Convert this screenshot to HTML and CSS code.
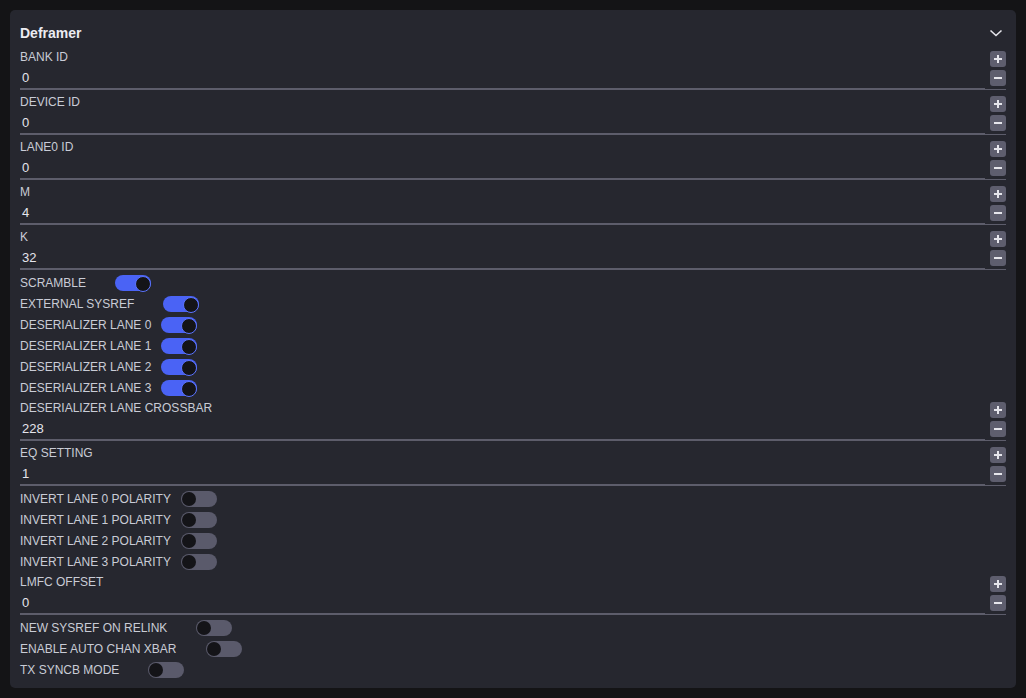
FILE: index.html
```html
<!DOCTYPE html>
<html lang="en">
<head>
  <meta charset="UTF-8" />
  <meta name="viewport" content="width=device-width, initial-scale=1.0" />
  <title>Deframer</title>
  <link rel="stylesheet" href="styles.css">
</head>
<body>
  <div class="panel">
    <div class="panel-header">
      <span class="panel-title">Deframer</span>
      <svg class="chevron" width="14" height="14" viewBox="0 0 14 14">
        <polyline points="1.5,4.5 7,9.5 12.5,4.5" fill="none" stroke="#e4e4ea" stroke-width="1.6" />
      </svg>
    </div>

    <div class="field">
      <div class="field-main">
        <div class="field-label">BANK ID</div>
        <div class="field-input">0</div>
      </div>
      <div class="spin">
        <button class="spin-btn plus"></button>
        <button class="spin-btn minus"></button>
      </div>
    </div>

    <div class="field">
      <div class="field-main">
        <div class="field-label">DEVICE ID</div>
        <div class="field-input">0</div>
      </div>
      <div class="spin">
        <button class="spin-btn plus"></button>
        <button class="spin-btn minus"></button>
      </div>
    </div>

    <div class="field">
      <div class="field-main">
        <div class="field-label">LANE0 ID</div>
        <div class="field-input">0</div>
      </div>
      <div class="spin">
        <button class="spin-btn plus"></button>
        <button class="spin-btn minus"></button>
      </div>
    </div>

    <div class="field">
      <div class="field-main">
        <div class="field-label">M</div>
        <div class="field-input">4</div>
      </div>
      <div class="spin">
        <button class="spin-btn plus"></button>
        <button class="spin-btn minus"></button>
      </div>
    </div>

    <div class="field">
      <div class="field-main">
        <div class="field-label">K</div>
        <div class="field-input">32</div>
      </div>
      <div class="spin">
        <button class="spin-btn plus"></button>
        <button class="spin-btn minus"></button>
      </div>
    </div>

    <div class="switch-row wide"><span>SCRAMBLE</span><span class="toggle on"></span></div>
    <div class="switch-row wide"><span>EXTERNAL SYSREF</span><span class="toggle on"></span></div>
    <div class="switch-row"><span>DESERIALIZER LANE 0</span><span class="toggle on"></span></div>
    <div class="switch-row"><span>DESERIALIZER LANE 1</span><span class="toggle on"></span></div>
    <div class="switch-row"><span>DESERIALIZER LANE 2</span><span class="toggle on"></span></div>
    <div class="switch-row"><span>DESERIALIZER LANE 3</span><span class="toggle on"></span></div>

    <div class="field">
      <div class="field-main">
        <div class="field-label">DESERIALIZER LANE CROSSBAR</div>
        <div class="field-input">228</div>
      </div>
      <div class="spin">
        <button class="spin-btn plus"></button>
        <button class="spin-btn minus"></button>
      </div>
    </div>

    <div class="field">
      <div class="field-main">
        <div class="field-label">EQ SETTING</div>
        <div class="field-input">1</div>
      </div>
      <div class="spin">
        <button class="spin-btn plus"></button>
        <button class="spin-btn minus"></button>
      </div>
    </div>

    <div class="switch-row"><span>INVERT LANE 0 POLARITY</span><span class="toggle"></span></div>
    <div class="switch-row"><span>INVERT LANE 1 POLARITY</span><span class="toggle"></span></div>
    <div class="switch-row"><span>INVERT LANE 2 POLARITY</span><span class="toggle"></span></div>
    <div class="switch-row"><span>INVERT LANE 3 POLARITY</span><span class="toggle"></span></div>

    <div class="field">
      <div class="field-main">
        <div class="field-label">LMFC OFFSET</div>
        <div class="field-input">0</div>
      </div>
      <div class="spin">
        <button class="spin-btn plus"></button>
        <button class="spin-btn minus"></button>
      </div>
    </div>

    <div class="switch-row wide"><span>NEW SYSREF ON RELINK</span><span class="toggle"></span></div>
    <div class="switch-row wide"><span>ENABLE AUTO CHAN XBAR</span><span class="toggle"></span></div>
    <div class="switch-row wide"><span>TX SYNCB MODE</span><span class="toggle"></span></div>
  </div>
</body>
</html>
```

FILE: styles.css
```css
:root {
  --page-bg: #141416;
  --panel-bg: #26272f;
  --label-color: #c9ccd6;
  --value-color: #e4e4ec;
  --line-color: #5d5d6b;
  --btn-bg: #5e5e6e;
  --accent: #4a63f5;
  --knob: #141418;
}

* {
  box-sizing: border-box;
}

body {
  margin: 0;
  padding: 10px;
  background: var(--page-bg);
  font-family: 'Liberation Sans', Arial, sans-serif;
  color: var(--label-color);
}

.panel {
  background: var(--panel-bg);
  border-radius: 5px;
  height: 678px;
  padding: 11px 10px 8px 10px;
}

.panel-header {
  display: flex;
  justify-content: space-between;
  align-items: center;
  height: 24px;
  margin-bottom: 2px;
}

.panel-title {
  font-size: 14px;
  font-weight: bold;
  color: #ececf2;
}

.chevron {
  margin-right: 3px;
}

/* number fields */
.field {
  display: flex;
  padding-top: 3px;
  margin-bottom: 2px;
}

.field-main {
  flex: 1;
}

.field-label {
  font-size: 12px;
  line-height: 14px;
}

.field-input {
  height: 26px;
  padding: 1px 0 0 2px;
  font-size: 13px;
  line-height: 25px;
  color: var(--value-color);
  border-bottom: 2px solid var(--line-color);
}

.spin {
  width: 21px;
  display: flex;
  flex-direction: column;
  gap: 3px;
  padding: 1px 1px 3px 5px;
  border-bottom: 1px solid var(--line-color);
}

.spin-btn {
  position: relative;
  width: 16px;
  height: 16px;
  padding: 0;
  border: none;
  border-radius: 3px;
  background: var(--btn-bg);
  cursor: pointer;
}

.spin-btn::before,
.spin-btn.plus::after {
  content: '';
  position: absolute;
  left: 4px;
  top: 7px;
  width: 8px;
  height: 2px;
  background: #e6e6ec;
}

.spin-btn.plus::after {
  left: 7px;
  top: 4px;
  width: 2px;
  height: 8px;
}

/* toggle rows */
.switch-row {
  display: flex;
  align-items: center;
  height: 21px;
  font-size: 12px;
}

.switch-row span:first-child {
  margin-right: 10px;
}

.switch-row.wide span:first-child {
  margin-right: 29px;
}

.toggle {
  position: relative;
  width: 36px;
  height: 16px;
  border-radius: 8px;
  background: #5a5a6b;
}

.toggle::after {
  content: '';
  position: absolute;
  top: 1px;
  left: 1px;
  width: 14px;
  height: 14px;
  border-radius: 50%;
  background: var(--knob);
}

.toggle.on {
  background: var(--accent);
}

.toggle.on::after {
  left: 20px;
  border: 1px solid #5b74ff;
}
```
